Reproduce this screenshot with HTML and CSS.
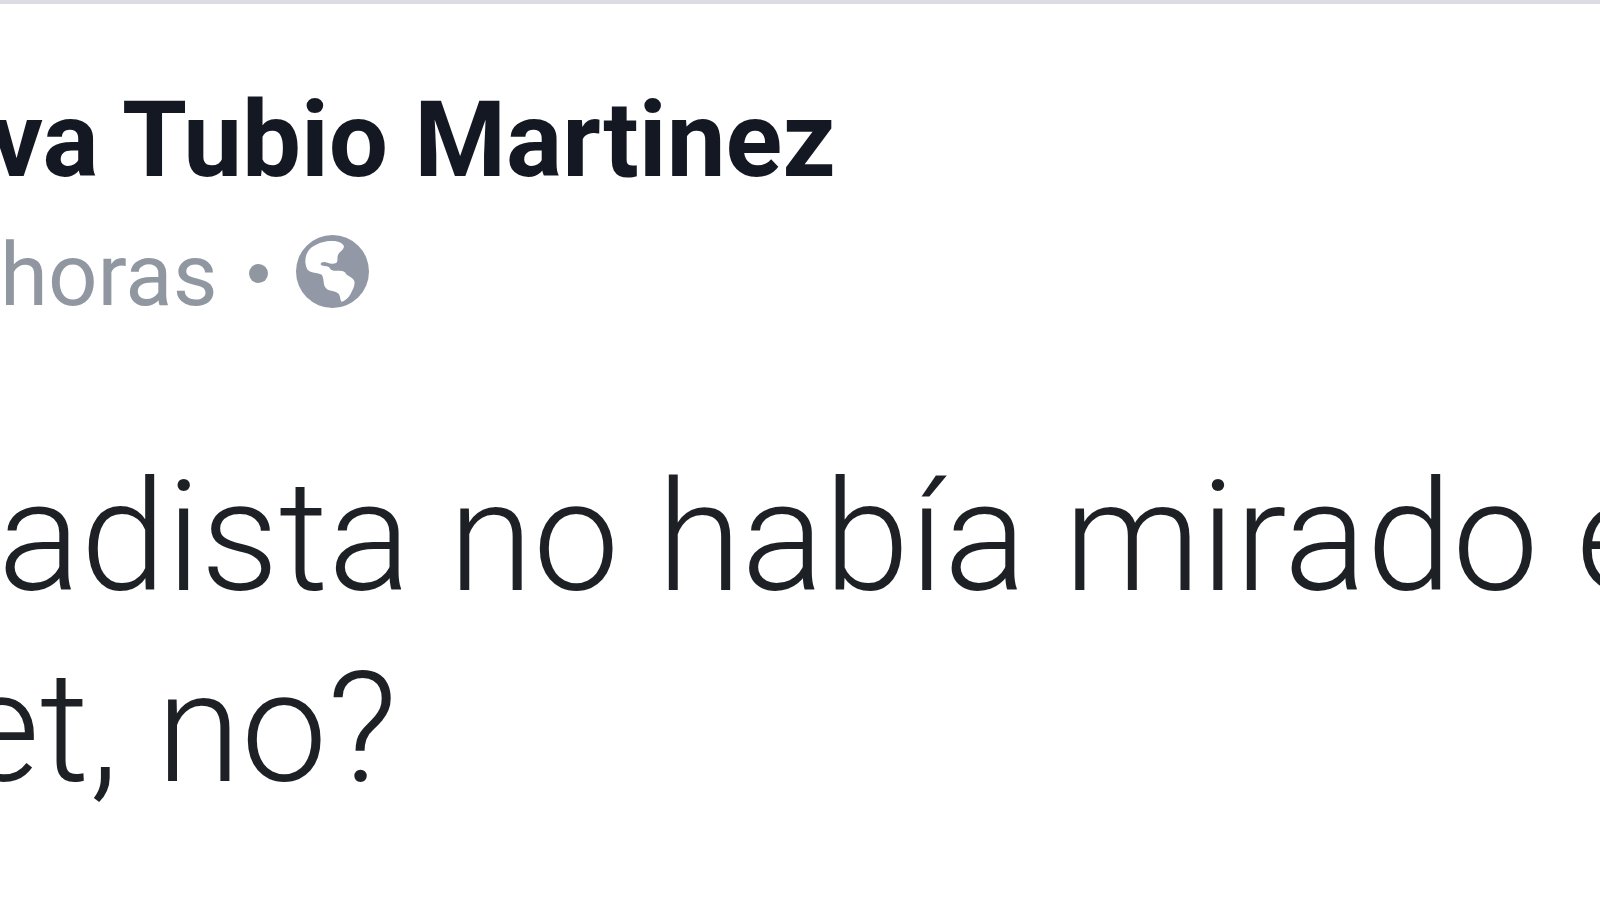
FILE: index.html
```html
<!DOCTYPE html>
<html lang="es">
<head>
<meta charset="utf-8">
<title>Eva Tubio Martinez</title>
<link rel="stylesheet" href="styles.css">
</head>
<body>
<article class="post">
  <header class="head">
    <h1 class="name">va Tubio Martinez</h1>
    <p class="meta"><span>horas</span><span class="dot"></span>
      <svg class="globe" viewBox="198 43 218 218" role="img" aria-label="Público"><circle cx="307" cy="152" r="109" fill="#9298a6"/><path fill="#fff" d="M298 61C315 59 338 64 341 76C342 88 326 92 323 104C320 112 324 118 319 126C312 130 300 129 292 126C282 121 270 125 272 131C275 137 290 134 297 139C303 152 318 150 328 150C340 150 346 154 348 160C358 168 372 172 373 184C373 196 368 206 361 219C354 232 342 241 334 242C328 236 332 222 322 216C310 208 294 212 286 200C278 190 283 176 275 162C262 154 242 158 232 146C223 130 223 104 238 86C254 71 276 63 298 61Z"/></svg>
    </p>
  </header>
  <p class="text"><span class="line">adista no había mirado e</span><span class="line line-second">et, no?</span></p>
</article>
</body>
</html>
```
FILE: styles.css
```css
body {
  margin: 0;
  background: #fff;
  font-family: Roboto, sans-serif;
  overflow: hidden;
}
.post {
  border-top: 4px solid #dcdce2;
  padding-top: 75px;
}
.name {
  margin: 0 0 0 -10px;
  font-size: 105px;
  line-height: 124px;
  font-weight: 700;
  color: #141823;
  white-space: nowrap;
}
.meta {
  display: flex;
  align-items: center;
  margin: 0;
  font-size: 87px;
  line-height: 144px;
  color: #9197a0;
}
.dot {
  width: 19px;
  height: 19px;
  margin: 0 28px 4px 31px;
  border-radius: 50%;
  background: #9197a0;
}
.globe {
  width: 73px;
  height: 73px;
  margin-bottom: 8px;
}
.text {
  margin: 95px 0 0 -2px;
  font-size: 154px;
  line-height: 191px;
  font-weight: 320;
  color: #1d2024;
  white-space: nowrap;
}
.line {
  display: block;
}
.line-second {
  margin-left: -38px;
}
```
